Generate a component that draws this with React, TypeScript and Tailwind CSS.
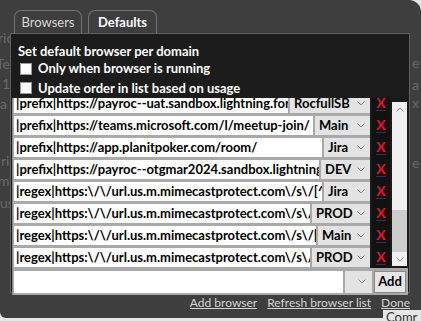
import React from "react";

type Row = { url: string; browser: string; comboW: string };

const rows: Row[] = [
  { url: "|prefix|https://payroc--uat.sandbox.lightning.force.com/", browser: "RocfullSB", comboW: "w-[80px]" },
  { url: "|prefix|https://teams.microsoft.com/l/meetup-join/", browser: "Main", comboW: "w-[55px]" },
  { url: "|prefix|https://app.planitpoker.com/room/", browser: "Jira", comboW: "w-[46px]" },
  { url: "|prefix|https://payroc--otgmar2024.sandbox.lightning.force.com/", browser: "DEV", comboW: "w-[49px]" },
  { url: "|regex|https:\\/\\/url.us.m.mimecastprotect.com\\/s\\/[^\\/]+\\/", browser: "Jira", comboW: "w-[46px]" },
  { url: "|regex|https:\\/\\/url.us.m.mimecastprotect.com\\/s\\/[^\\/]+", browser: "PROD", comboW: "w-[58px]" },
  { url: "|regex|https:\\/\\/url.us.m.mimecastprotect.com\\/s\\/[^\\/]", browser: "Main", comboW: "w-[52px]" },
  { url: "|regex|https:\\/\\/url.us.m.mimecastprotect.com\\/s\\/[^\\/]+", browser: "PROD", comboW: "w-[58px]" },
];

const leftFragments: { t: string; x: string; y: string }[] = [
  { t: "ric", x: "left-[-2px]", y: "top-[30px]" },
  { t: "Te", x: "left-[-4px]", y: "top-[56px]" },
  { t: "1", x: "left-[2px]", y: "top-[76px]" },
  { t: "a", x: "left-[0px]", y: "top-[96px]" },
  { t: "ri", x: "left-[1px]", y: "top-[153px]" },
  { t: "me", x: "left-[-2px]", y: "top-[173px]" },
  { t: "us", x: "left-[0px]", y: "top-[195px]" },
];

const rightFragments: { t: string; y: string }[] = [
  { t: "e", y: "top-[55px]" },
  { t: "a", y: "top-[77px]" },
  { t: "x", y: "top-[95px]" },
  { t: "e", y: "top-[155px]" },
];

function Chevron({ color = "#8a8a8a", up = false }: { color?: string; up?: boolean }) {
  return (
    <svg width="8" height="5" viewBox="0 0 8 5" className="shrink-0">
      <polyline
        points={up ? "0.5,4.5 4,1 7.5,4.5" : "0.5,0.5 4,4 7.5,0.5"}
        fill="none"
        stroke={color}
        strokeWidth="1"
      />
    </svg>
  );
}

export default function App() {
  return (
    <div className="relative w-[421px] h-[321px] overflow-hidden bg-[#e6e6e6] font-[Lato,'Open_Sans',sans-serif]">
      <div className="h-[318px] bg-[#3e3e3e] rounded-tr-[12px] rounded-bl-[6px] pt-[10px] pl-[10px] flex flex-col">
        {/* tabs */}
        <div className="flex gap-[6px] pl-[4px] h-[23px]">
          <div className="w-[68px] rounded-t-[7px] border border-b-0 border-[#727272] text-[#d6d6d6] text-[13px] flex items-center justify-center pt-[1px]">
            Browsers
          </div>
          <div className="w-[69px] rounded-t-[7px] border border-b-0 border-[#727272] text-white font-bold text-[13px] flex items-center justify-center pt-[1px]">
            Defaults
          </div>
        </div>
        {/* panel */}
        <div className="w-[400px] h-[260px] border border-[#5f5f5f] bg-[#1c1c1c] flex flex-col">
          <div className="pl-[7px] pt-[9px] h-[25px] text-white font-bold text-[13px] leading-[17px]">
            Set default browser per domain
          </div>
          <div className="flex items-center h-[20px] pl-[9px] gap-[6px]">
            <div className="w-[12px] h-[12px] bg-white border border-[#9a9a9a]" />
            <span className="text-white font-bold text-[13px]">Only when browser is running</span>
          </div>
          <div className="flex items-center h-[20px] pl-[9px] gap-[6px]">
            <div className="w-[12px] h-[12px] bg-white border border-[#9a9a9a]" />
            <span className="text-white font-bold text-[13px]">Update order in list based on usage</span>
          </div>
          {/* list */}
          <div className="ml-[1px] w-[396px] flex-1 flex flex-col">
            <div className="flex h-[170px] bg-[#1a1a1a]">
              <div className="w-[358px] overflow-hidden bg-[#a9a9a9] border-l border-[#8c8c8c] pl-[1px]">
                <div className="mt-[-4px] flex flex-col gap-[3px]">
                  {rows.map((r, i) => (
                    <div key={i} className="flex h-[19px] gap-[2px]">
                      <div className="flex-1 min-w-0 bg-white overflow-hidden whitespace-nowrap text-black font-bold text-[13px] leading-[19px] pl-[2px]">
                        {r.url}
                      </div>
                      <div className={`${r.comboW} shrink-0 bg-[#e3e3e3] flex items-center justify-between pl-[4px] pr-[5px] text-black font-bold text-[13px] whitespace-nowrap`}>
                        <span>{r.browser}</span>
                        <Chevron />
                      </div>
                    </div>
                  ))}
                </div>
              </div>
              <div className="w-[2px]" />
              <div className="w-[18px] overflow-hidden bg-[#121212]">
                <div className="mt-[-4px] flex flex-col gap-[3px]">
                  {rows.map((_, i) => (
                    <div key={i} className="h-[19px] flex items-center justify-center">
                      <span className="text-[#e8102a] font-bold text-[14px] leading-[14px] border-b border-[#2a3566]">X</span>
                    </div>
                  ))}
                </div>
              </div>
              <div className="w-[2px]" />
              <div className="w-[15px] mt-[4px] mb-[2px] bg-[#f0f0f0] flex flex-col">
                <div className="h-[14px] flex items-center justify-center">
                  <Chevron color="#a0a0a0" up />
                </div>
                <div className="flex-1 flex flex-col">
                  <div className="flex-1" />
                  <div className="h-[42px] bg-[#cdcdcd]" />
                </div>
                <div className="h-[14px] flex items-center justify-center">
                  <Chevron color="#a0a0a0" />
                </div>
              </div>
            </div>
            {/* new entry row */}
            <div className="flex-1 bg-[#a9a9a9] border-l border-[#8c8c8c] pl-[1px] pt-[3px] pb-[2px] pr-[2px] flex gap-[2px]">
              <div className="w-[329px] bg-white" />
              <div className="w-[27px] bg-[#e3e3e3] flex items-center justify-end pr-[6px]">
                <Chevron />
              </div>
              <div className="flex-1 bg-[#e6e6e6] border border-[#8a8a8a] flex items-center justify-center text-black font-bold text-[13px]">
                Add
              </div>
            </div>
          </div>
        </div>
        {/* links */}
        <div className="w-[400px] h-[18px] flex justify-end items-center gap-[10px] text-[12px] text-[#d4d4d4] pt-[1px]">
          <span className="underline">Add browser</span>
          <span className="underline">Refresh browser list</span>
          <span className="underline">Done</span>
        </div>
      </div>
      {/* document text showing through the translucent window edges */}
      <div className="absolute left-0 top-0 w-[10px] h-[230px] overflow-hidden pointer-events-none">
        {leftFragments.map((f, i) => (
          <span key={i} className={`absolute ${f.x} ${f.y} text-[14px] leading-[16px] text-[#6a6a6a]`}>
            {f.t}
          </span>
        ))}
      </div>
      <div className="absolute left-[411px] top-0 w-[10px] h-[200px] overflow-hidden pointer-events-none">
        {rightFragments.map((f, i) => (
          <span key={i} className={`absolute left-[1px] ${f.y} text-[14px] leading-[16px] text-[#6a6a6a]`}>
            {f.t}
          </span>
        ))}
      </div>
      <div className="absolute right-0 bottom-0 w-[38px] h-[11px] bg-[#e6e6e6] overflow-hidden text-[13px] leading-[15px] text-[#333] pl-[3px]">
        Comr
      </div>
    </div>
  );
}
